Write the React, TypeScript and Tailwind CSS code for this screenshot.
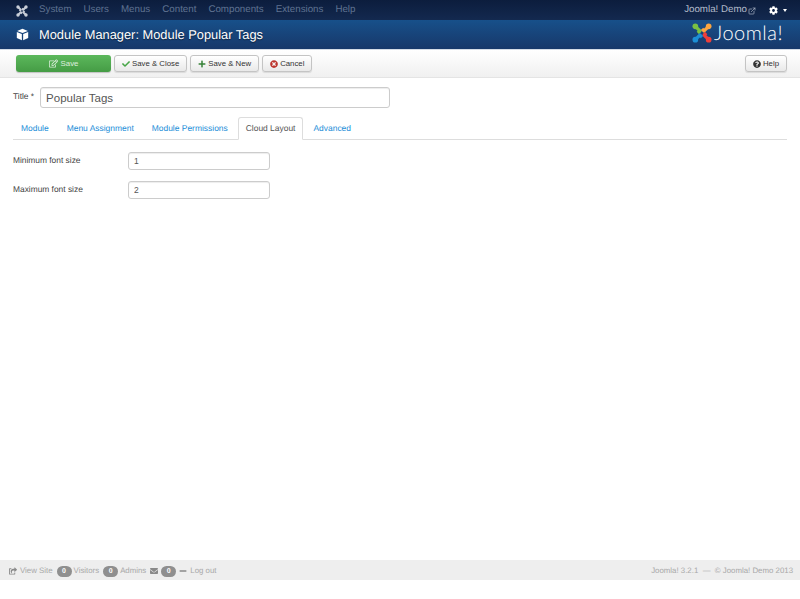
import { FaCheck, FaPlus, FaCog, FaRegEdit, FaTimesCircle, FaQuestionCircle, FaEnvelope, FaMinus, FaShareSquare } from "react-icons/fa";
import { ExternalLink } from "lucide-react";

function JoomlaMark({ size, mono }: { size: number; mono?: boolean }) {
  const c = mono
    ? ["#c8ced8", "#c8ced8", "#c8ced8", "#c8ced8"]
    : ["#7ac143", "#f9a541", "#ee3f3b", "#1c8fd6"];
  return (
    <svg width={size} height={size} viewBox="0 0 24 24" fill="none" strokeWidth={4} strokeLinejoin="round">
      <path d="M4 4L9.5 9.5L7 12" stroke={c[0]} />
      <path d="M20 4L14.5 9.5L12 7" stroke={c[1]} />
      <path d="M20 20L14.5 14.5L17 12" stroke={c[2]} />
      <path d="M4 20L9.5 14.5L12 17" stroke={c[3]} />
      <circle cx="4" cy="4" r="3.4" fill={c[0]} />
      <circle cx="20" cy="4" r="3.4" fill={c[1]} />
      <circle cx="20" cy="20" r="3.4" fill={c[2]} />
      <circle cx="4" cy="20" r="3.4" fill={c[3]} />
    </svg>
  );
}

function CubeIcon() {
  return (
    <svg width={13} height={13} viewBox="0 0 16 16" fill="#fff">
      <path d="M8 1L14.6 3.6L8 6.2L1.4 3.6Z" />
      <path d="M1 5L7.2 7.5V15L1 12.4Z" />
      <path d="M15 5L8.8 7.5V15L15 12.4Z" />
    </svg>
  );
}

const menu = ["System", "Users", "Menus", "Content", "Components", "Extensions", "Help"];
const tabs = ["Module", "Menu Assignment", "Module Permissions", "Cloud Layout", "Advanced"];

function ToolButton({ icon, label }: { icon: React.ReactNode; label: string }) {
  return (
    <button className="h-[17px] px-[7px] flex items-center gap-[2px] rounded-[3px] border border-[#c4c4c4] bg-gradient-to-b from-white to-[#e9e9e9] text-[#333] text-[7.8px] shadow-[0_1px_1px_rgba(0,0,0,0.1)]">
      {icon}
      {label}
    </button>
  );
}

function Badge({ n }: { n: number }) {
  return <span className="w-[15px] h-[11px] rounded-full bg-[#8f8f8f] text-white text-[7px] leading-none font-bold flex items-center justify-center">{n}</span>;
}

export default function App() {
  return (
    <div className="h-[599px] w-[800px] flex flex-col bg-white font-['Liberation_Sans',Arial,sans-serif] [text-rendering:geometricPrecision] overflow-hidden">
      <div className="h-5 pt-px flex items-center bg-gradient-to-b from-[#0c1d3d] to-[#13294f] text-[9.75px] text-[#5f7291]">
        <div className="w-[39px] flex justify-center pl-[4px]">
          <JoomlaMark size={12} mono />
        </div>
        <nav className="flex gap-[12px]">
          {menu.map((m) => (
            <span key={m}>{m}</span>
          ))}
        </nav>
        <div className="ml-auto flex items-center pr-[13px] text-[#b3bccb]">
          <span>Joomla! Demo</span>
          <ExternalLink size={8} className="ml-[1px]" />
          <FaCog size={9} className="ml-[13px] text-white" />
          <span className="ml-[5px] w-0 h-0 border-x-[2.5px] border-x-transparent border-t-[3px] border-t-white" />
        </div>
      </div>

      <div className="h-[30px] flex items-center bg-gradient-to-b from-[#17508a] to-[#17386a] border-b border-[#d5dce6]">
        <div className="w-[39px] flex justify-center pl-[6px]">
          <CubeIcon />
        </div>
        <h1 className="text-[12.85px] text-white [text-shadow:0_1px_1px_rgba(0,0,0,0.5)]">Module Manager: Module Popular Tags</h1>
        <div className="ml-auto flex items-center gap-[2px] pr-[17px] pb-[4px]">
          <JoomlaMark size={20} />
          <span className="font-['Lato',sans-serif] font-light text-[20px] tracking-[0.5px] leading-none text-white">Joomla!</span>
        </div>
      </div>

      <div className="h-[28px] flex items-center gap-[3px] pl-4 pr-[13px] bg-gradient-to-b from-white to-[#f0f0f0] border-b border-[#e4e4e4]">
        <button className="w-[95px] h-[17px] flex items-center justify-center gap-[3px] rounded-[3px] bg-gradient-to-b from-[#5cb85c] to-[#459c45] text-white/80 text-[7.8px] shadow-[0_1px_1px_rgba(0,0,0,0.2)]">
          <FaRegEdit size={9} />
          Save
        </button>
        <ToolButton icon={<FaCheck size={8} className="text-[#46a546]" />} label="Save & Close" />
        <ToolButton icon={<FaPlus size={8} className="text-[#378137]" />} label="Save & New" />
        <ToolButton icon={<FaTimesCircle size={8} className="text-[#bd362f]" />} label="Cancel" />
        <div className="ml-auto">
          <ToolButton icon={<FaQuestionCircle size={8} className="text-[#333]" />} label="Help" />
        </div>
      </div>

      <div className="flex-1 px-[13px] pt-[9px]">
        <div className="flex items-center gap-[6px]">
          <label className="text-[8.4px] text-[#444] -mt-[3px]">Title *</label>
          <input readOnly value="Popular Tags" className="w-[350px] h-[21px] px-[5px] text-[11.5px] text-[#555] border border-[#ccc] rounded-[3px] shadow-[inset_0_1px_1px_rgba(0,0,0,0.075)] outline-none" />
        </div>

        <div className="mt-[9px] flex gap-[2px] h-[23px] border-b border-[#ddd] text-[8.45px] text-[#1c8ed8]">
          {tabs.map((t) =>
            t === "Cloud Layout" ? (
              <span key={t} className="h-[23px] flex items-center px-[7px] text-[#555] bg-white border border-[#ddd] border-b-white rounded-t-[3px]">{t}</span>
            ) : (
              <span key={t} className="h-[23px] flex items-center px-[8px]">{t}</span>
            )
          )}
        </div>

        <div className="mt-[12px] flex flex-col gap-[11px]">
          <div className="flex items-center h-[18px] text-[8.4px] text-[#444]">
            <label className="w-[115px] pb-[2px]">Minimum font size</label>
            <input readOnly value="1" className="w-[142px] h-[18px] px-[5px] text-[8.5px] text-[#555] border border-[#ccc] rounded-[3px] shadow-[inset_0_1px_1px_rgba(0,0,0,0.075)] outline-none" />
          </div>
          <div className="flex items-center h-[18px] text-[8.4px] text-[#444]">
            <label className="w-[115px] pb-[2px]">Maximum font size</label>
            <input readOnly value="2" className="w-[142px] h-[18px] px-[5px] text-[8.5px] text-[#555] border border-[#ccc] rounded-[3px] shadow-[inset_0_1px_1px_rgba(0,0,0,0.075)] outline-none" />
          </div>
        </div>
      </div>

      <div className="h-5 mb-[19px] pt-[2px] flex items-center bg-[#eeeeee] px-[9px] text-[7.85px] text-[#a8a8a8]">
        <FaShareSquare size={8} className="text-[#8a8a8a] mr-[3px]" />
        <span className="mr-[4px]">View Site</span>
        <Badge n={0} />
        <span className="ml-[2px] mr-[4px]">Visitors</span>
        <Badge n={0} />
        <span className="ml-[2px] mr-[4px]">Admins</span>
        <FaEnvelope size={8} className="text-[#8a8a8a] mr-[3px]" />
        <Badge n={0} />
        <FaMinus size={8} className="text-[#8a8a8a] mx-[3px]" />
        <span>Log out</span>
        <span className="ml-auto -mr-[2px]">Joomla! 3.2.1 &nbsp;— &nbsp;© Joomla! Demo 2013</span>
      </div>
    </div>
  );
}
